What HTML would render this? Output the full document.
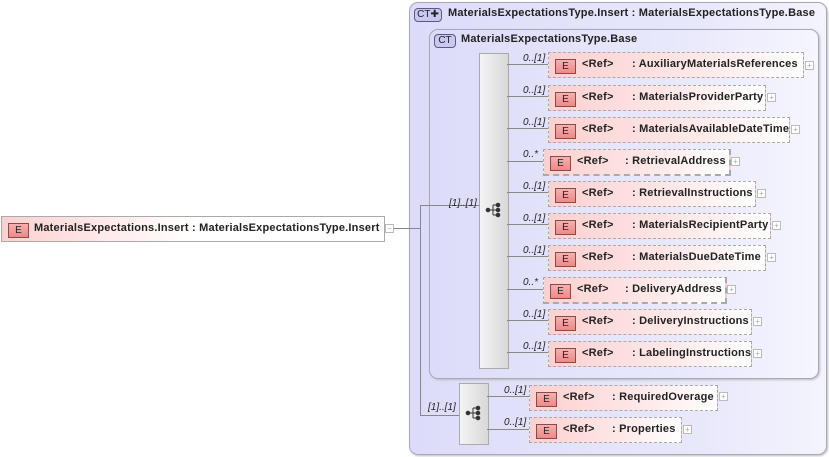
<!DOCTYPE html><html><head><meta charset="utf-8"><style>
body{margin:0;width:829px;height:457px;background:#fff;position:relative;overflow:hidden;font:bold 11px "Liberation Sans",sans-serif;color:#222;letter-spacing:0.2px}
.a{position:absolute}
.outer{left:409px;top:2px;width:416px;height:451px;border:1px solid #a8a8b8;border-radius:9px;background:linear-gradient(90deg,#dcdcfa,#e8e8fb 70%,#f4f4fd);box-shadow:1px 1px 2px #bbb}
.inner{left:429px;top:29px;width:388px;height:348px;border:1px solid #a8a8b8;border-radius:9px;background:linear-gradient(90deg,#dcdcfa,#eaeafc 70%,#f6f6fe);box-shadow:1px 1px 2px #bbb}
.ct{border:1px solid #5a5a80;border-radius:4px;background:#c8c8f0;font-weight:normal;font-size:10px;height:12px;line-height:12px;text-align:center;color:#222;letter-spacing:0}
.seq{background:linear-gradient(90deg,#f4f4f4,#d8d8d8);border:1px solid #aaa}
.el{height:24px;border:1px dashed #aaa;background:linear-gradient(90deg,#fcd0d0,#fde8e8 60%,#fff)}
.E{position:absolute;left:6px;top:6px;width:19px;height:13px;border:1px solid #8a4a4a;background:linear-gradient(#f5b0b0,#f08888);font-weight:normal;font-size:10px;text-align:center;line-height:13px;color:#222;letter-spacing:0}
.ref{position:absolute;left:33px;top:5px}
.nm{position:absolute;top:5px;white-space:nowrap}
.pl{width:7px;height:7px;border:1px solid #bbb;background:#fff;font-size:8px;line-height:7px;text-align:center;color:#aaa;font-weight:normal;letter-spacing:0}
.ln{background:#888}
.lb{font-style:italic;font-weight:normal;font-size:10px;color:#222;letter-spacing:0}
</style></head><body>
<div class="a outer"></div>
<div class="a ct" style="left:414px;top:8px;width:26px">CT✚</div>
<div class="a" style="left:448px;top:7px">MaterialsExpectationsType.Insert : MaterialsExpectationsType.Base</div>
<div class="a inner"></div>
<div class="a ct" style="left:434px;top:34px;width:20px">CT</div>
<div class="a" style="left:461px;top:33px">MaterialsExpectationsType.Base</div>

<div class="a el" style="left:1px;top:216px;width:382px;border:1px solid #aaa;background:linear-gradient(90deg,#fcd0d0,#fff 50%)"><div class="E">E</div><div class="nm" style="left:32px">MaterialsExpectations.Insert : MaterialsExpectationsType.Insert</div></div>
<div class="a pl" style="left:385px;top:224px">−</div>
<div class="a ln" style="left:394px;top:228px;width:26px;height:1px"></div>
<div class="a ln" style="left:420px;top:205px;width:1px;height:210px"></div>
<div class="a ln" style="left:420px;top:205px;width:59px;height:1px"></div>
<div class="a ln" style="left:420px;top:415px;width:39px;height:1px"></div>
<div class="a lb" style="left:449px;top:198px">[1]..[1]</div>
<div class="a lb" style="left:428px;top:402px">[1]..[1]</div>

<div class="a seq" style="left:479px;top:53px;width:28px;height:314px"></div>
<div class="a seq" style="left:459px;top:383px;width:28px;height:60px"></div>
<svg class="a" style="left:485px;top:202px" width="18" height="16"><g fill="#333" stroke="#333"><circle cx="3" cy="8" r="1.8"/><line x1="3" y1="8" x2="8" y2="8"/><line x1="8" y1="3" x2="8" y2="13"/><line x1="8" y1="3" x2="13" y2="3"/><line x1="8" y1="8" x2="13" y2="8"/><line x1="8" y1="13" x2="13" y2="13"/><circle cx="13" cy="3" r="1.8"/><circle cx="13" cy="8" r="1.8"/><circle cx="13" cy="13" r="1.8"/></g></svg>
<svg class="a" style="left:465px;top:405px" width="18" height="16"><g fill="#333" stroke="#333"><circle cx="3" cy="8" r="1.8"/><line x1="3" y1="8" x2="8" y2="8"/><line x1="8" y1="3" x2="8" y2="13"/><line x1="8" y1="3" x2="13" y2="3"/><line x1="8" y1="8" x2="13" y2="8"/><line x1="8" y1="13" x2="13" y2="13"/><circle cx="13" cy="3" r="1.8"/><circle cx="13" cy="8" r="1.8"/><circle cx="13" cy="13" r="1.8"/></g></svg>

<div class="a ln" style="left:507px;top:64px;width:41px;height:1px"></div><div class="a lb" style="left:523px;top:53px">0..[1]</div>
<div class="a el" style="left:548px;top:52px;width:254px"><div class="E">E</div><div class="ref">&lt;Ref&gt;</div><div class="nm" style="left:83px">: AuxiliaryMaterialsReferences</div></div><div class="a pl" style="left:805px;top:61px">+</div>

<div class="a ln" style="left:507px;top:96px;width:41px;height:1px"></div><div class="a lb" style="left:523px;top:85px">0..[1]</div>
<div class="a el" style="left:548px;top:85px;width:216px"><div class="E">E</div><div class="ref">&lt;Ref&gt;</div><div class="nm" style="left:83px">: MaterialsProviderParty</div></div><div class="a pl" style="left:767px;top:93px">+</div>

<div class="a ln" style="left:507px;top:128px;width:41px;height:1px"></div><div class="a lb" style="left:523px;top:117px">0..[1]</div>
<div class="a el" style="left:548px;top:117px;width:240px"><div class="E">E</div><div class="ref">&lt;Ref&gt;</div><div class="nm" style="left:83px">: MaterialsAvailableDateTime</div></div><div class="a pl" style="left:791px;top:125px">+</div>

<div class="a ln" style="left:507px;top:161px;width:36px;height:1px"></div><div class="a lb" style="left:523px;top:149px">0..*</div>
<div class="a el" style="left:543px;top:149px;width:185px;border-width:1px 2px 2px 1px"><div class="E">E</div><div class="ref">&lt;Ref&gt;</div><div class="nm" style="left:81px">: RetrievalAddress</div></div><div class="a pl" style="left:731px;top:157px">+</div>

<div class="a ln" style="left:507px;top:192px;width:41px;height:1px"></div><div class="a lb" style="left:523px;top:181px">0..[1]</div>
<div class="a el" style="left:548px;top:181px;width:206px"><div class="E">E</div><div class="ref">&lt;Ref&gt;</div><div class="nm" style="left:83px">: RetrievalInstructions</div></div><div class="a pl" style="left:757px;top:189px">+</div>

<div class="a ln" style="left:507px;top:224px;width:41px;height:1px"></div><div class="a lb" style="left:523px;top:213px">0..[1]</div>
<div class="a el" style="left:548px;top:213px;width:221px"><div class="E">E</div><div class="ref">&lt;Ref&gt;</div><div class="nm" style="left:83px">: MaterialsRecipientParty</div></div><div class="a pl" style="left:772px;top:221px">+</div>

<div class="a ln" style="left:507px;top:256px;width:41px;height:1px"></div><div class="a lb" style="left:523px;top:245px">0..[1]</div>
<div class="a el" style="left:548px;top:245px;width:216px"><div class="E">E</div><div class="ref">&lt;Ref&gt;</div><div class="nm" style="left:83px">: MaterialsDueDateTime</div></div><div class="a pl" style="left:767px;top:253px">+</div>

<div class="a ln" style="left:507px;top:289px;width:36px;height:1px"></div><div class="a lb" style="left:523px;top:277px">0..*</div>
<div class="a el" style="left:543px;top:277px;width:181px;border-width:1px 2px 2px 1px"><div class="E">E</div><div class="ref">&lt;Ref&gt;</div><div class="nm" style="left:81px">: DeliveryAddress</div></div><div class="a pl" style="left:727px;top:285px">+</div>

<div class="a ln" style="left:507px;top:320px;width:41px;height:1px"></div><div class="a lb" style="left:523px;top:309px">0..[1]</div>
<div class="a el" style="left:548px;top:309px;width:202px"><div class="E">E</div><div class="ref">&lt;Ref&gt;</div><div class="nm" style="left:83px">: DeliveryInstructions</div></div><div class="a pl" style="left:753px;top:317px">+</div>

<div class="a ln" style="left:507px;top:352px;width:41px;height:1px"></div><div class="a lb" style="left:523px;top:341px">0..[1]</div>
<div class="a el" style="left:548px;top:341px;width:202px"><div class="E">E</div><div class="ref">&lt;Ref&gt;</div><div class="nm" style="left:83px">: LabelingInstructions</div></div><div class="a pl" style="left:753px;top:349px">+</div>

<div class="a ln" style="left:487px;top:396px;width:42px;height:1px"></div><div class="a lb" style="left:504px;top:385px">0..[1]</div>
<div class="a el" style="left:529px;top:385px;width:187px"><div class="E">E</div><div class="ref">&lt;Ref&gt;</div><div class="nm" style="left:82px">: RequiredOverage</div></div><div class="a pl" style="left:719px;top:392px">+</div>

<div class="a ln" style="left:487px;top:429px;width:42px;height:1px"></div><div class="a lb" style="left:504px;top:417px">0..[1]</div>
<div class="a el" style="left:529px;top:417px;width:151px"><div class="E">E</div><div class="ref">&lt;Ref&gt;</div><div class="nm" style="left:82px">: Properties</div></div><div class="a pl" style="left:683px;top:425px">+</div>
</body></html>
